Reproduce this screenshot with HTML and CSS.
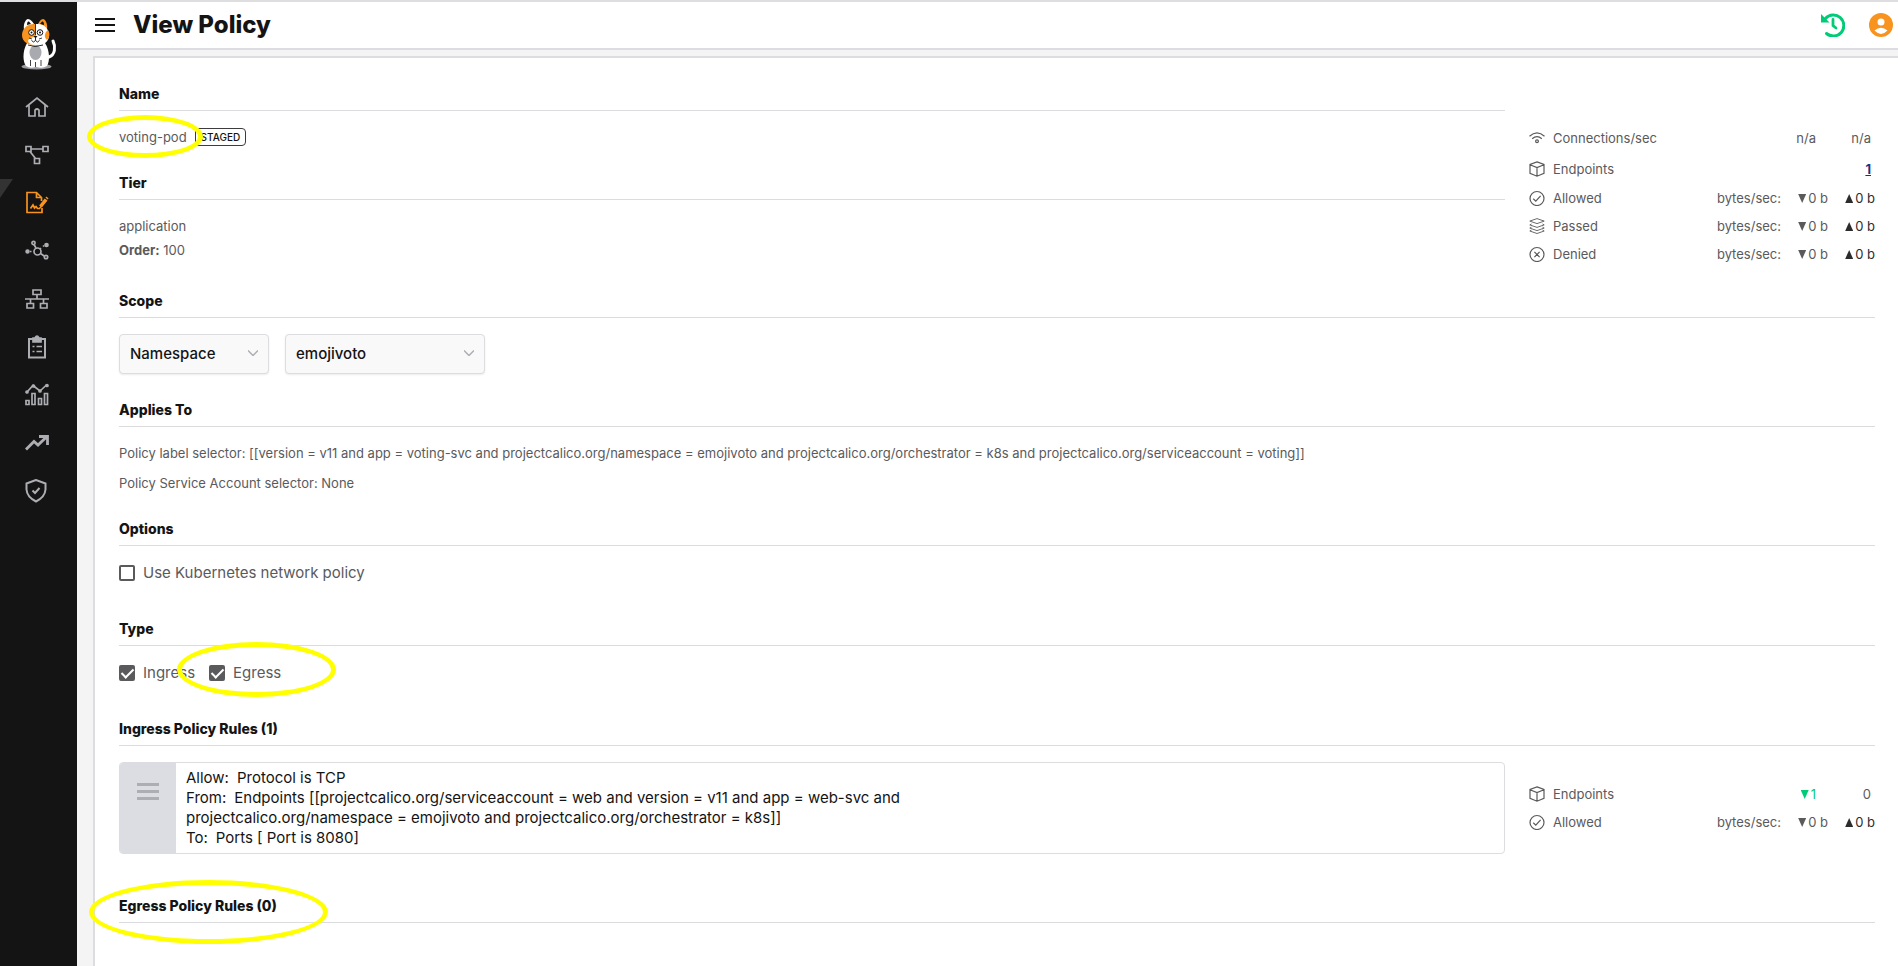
FILE: index.html
```html
<!DOCTYPE html>
<html lang="en">
<head>
<meta charset="utf-8">
<title>View Policy</title>
<link rel="stylesheet" href="styles.css">
</head>
<body>
<svg class="defs" aria-hidden="true">
  <symbol id="i-cube" viewBox="0 0 16 16"><path d="M8 .9 15 3.400v8.900L8 15.200 1 12.300V3.400zM1 3.800l7 2.700 7-2.700M8 6.500v8.600"/></symbol>
  <symbol id="i-allow" viewBox="0 0 16 16"><circle cx="8" cy="8.500" r="7"/><path d="m4.300 8.800 2.500 2.400 4.800-5.400"/></symbol>
  <symbol id="i-wifi" viewBox="0 0 16 16"><path d="M.5 6.200Q8-.6 15.500 6.200M3.200 8.700Q8 4.400 12.800 8.700"/><circle cx="8" cy="11.200" r="1.400"/></symbol>
  <symbol id="i-layers" viewBox="0 0 16 16"><path stroke-width=".9" d="m8 .6 7.200 2.500L8 5.600.8 3.100zM2.500 6 .8 6.900 8 9.400l7.200-2.500L13.500 6M2.500 9.200l-1.700.9L8 12.600l7.200-2.500-1.700-.9M2.500 12.100l-1.700.9L8 15.500l7.200-2.500-1.700-.9"/></symbol>
  <symbol id="i-deny" viewBox="0 0 16 16"><circle cx="8" cy="8.500" r="7"/><path d="m5.400 5.900 5.200 5.200m0-5.200-5.200 5.200"/></symbol>
</svg>

<div class="app">
  <nav class="sidebar" aria-label="Main">
    <a class="logo" href="#" aria-label="Home">
      <svg width="36" height="52" viewBox="0 0 36 52">
        <ellipse cx="15.500" cy="47.500" rx="15" ry="3" fill="#9b9ca1"/>
        <path d="M28 38c6-2 7-10 4-16" fill="none" stroke="#fff" stroke-width="3" stroke-linecap="round"/>
        <path d="M6 24C1 33 2 43 5 47q4 3 10 1 7 2 11-1c3-5 3-15-2-23z" fill="#fff"/>
        <ellipse cx="14.500" cy="33.500" rx="6" ry="7.500" fill="#a9aaaf"/>
        <path d="M9.500 41v6m10.500-6v6M14.500 43v5" stroke="#141414" fill="none" stroke-width=".8"/>
        <path d="M3 11C2 4 5 0 7 0s5 3 6 5z" fill="#fff"/><path d="M6 6C6 3 7 2 8 2.500L10 5z" fill="#141414"/>
        <path d="M26 11C27 4 24 0 22 0s-4 3-5 5z" fill="#f7931e"/><path d="M23 6c0-3-1-4-2-3.500L19 5z" fill="#141414"/>
        <path d="M15 5C6 4 1 10 1 16c0 7 6 10 14 10z" fill="#f7931e"/>
        <path d="M15 5c8-1 13 5 13 11 0 7-5 10-13 10z" fill="#fff"/>
        <path d="M27 11c2 3 2 7-1 10-3-2-3-7 1-10z" fill="#f7931e"/>
        <ellipse cx="14.500" cy="22" rx="7.500" ry="4" fill="#fff"/>
        <path d="M14.500 5v11M8 19l3 1m10-1-3 1" stroke="#141414" stroke-width=".8"/>
        <circle cx="10.500" cy="13.500" r="2.800" fill="#fff" stroke="#141414"/><circle cx="19" cy="13.500" r="2.800" fill="#fff" stroke="#141414"/>
        <circle cx="10.500" cy="13.500" r="1" fill="#141414"/><circle cx="19" cy="13.500" r="1" fill="#141414"/>
        <path d="M12.500 17h4l-2 2.500z" fill="#141414"/>
        <path d="M14.500 19v2.500m-4 0q2 3 4 0 2 3 4 0M7 26q7 3 15 0" fill="none" stroke="#141414" stroke-width=".9"/>
      </svg>
    </a>
    <a class="nav" href="#" aria-label="Dashboard"><svg viewBox="0 0 24 24"><path d="m1 12 11-9 11 9M4 10v11h6v-6q2-2 4 0v6h6V10"/></svg></a>
    <a class="nav" href="#" aria-label="Service graph"><svg viewBox="0 0 24 24"><path d="M1 3.500h5v5H1zm17 0h5v5h-5zm-8.500 12h5v5h-5zM6 6h12M5 8.500l5.500 7"/></svg></a>
    <a class="nav nav-active" href="#" aria-label="Policies" aria-current="page"><svg viewBox="0 0 24 24"><path d="M17 17v4.500H2v-20h9.500l5 5V10M11.500 1.500v5h5"/><path d="M5.500 17.500 8 14l1.500 3 1.500-1.500 1.500 2h2l7-8.500"/><path d="m15.500 15.500 5.500-7" stroke-width="3.500"/><path d="m21.500 7.500 1-1" stroke-width="3"/></svg></a>
    <a class="nav" href="#" aria-label="Endpoints"><svg viewBox="0 0 24 24"><circle cx="12.500" cy="12.500" r="3.500"/><path d="M11 9 9 5.500m6.500 9L20 17.500M15 10l1-1m2-1.500 1-1M5 12.500h1.500"/><circle cx="8.500" cy="4" r="1.600"/><circle cx="21" cy="18" r="1.700"/><circle class="solid" cx="21.500" cy="6" r="1.500"/><circle class="solid" cx="2.500" cy="12.500" r="1.400"/></svg></a>
    <a class="nav" href="#" aria-label="Networks"><svg viewBox="0 0 24 24"><path d="M8 3h8v4.500H8zM2 16.500h6.500v4.500H2zm13.500 0H22v4.500h-6.500zM0 12h24M12 7.500V12m-6.500 0v4.500m13-4.500v4.500"/></svg></a>
    <a class="nav" href="#" aria-label="Compliance"><svg viewBox="0 0 24 24"><path d="M4 4h16v18.500H4z" stroke-width="2"/><path class="solid" d="M8 3h2q2-4 4 0h2v4H8z"/><path d="M7.500 11.500h2m2 0H17m-9.500 5h2m2 0H17"/></svg></a>
    <a class="nav" href="#" aria-label="Activity"><svg viewBox="0 0 24 24"><path d="m2 9 6-6.500L15 8l7-6.500M1 17.500h3v4H1zM7 10.500h3v11H7zm6.500 5h3v6h-3zm6-5h3v11h-3z"/><circle class="solid" cx="2" cy="9" r="1"/><circle class="solid" cx="8.500" cy="3" r="1"/><circle class="solid" cx="15" cy="8" r="1"/><circle class="solid" cx="22" cy="2.500" r="1"/></svg></a>
    <a class="nav" href="#" aria-label="Trends"><svg viewBox="0 0 24 24"><path d="m1 18.500 8-8 4 3.500 9-8.500M14 5.500h8.500V14" stroke-width="2.800"/></svg></a>
    <a class="nav" href="#" aria-label="Threat defense"><svg viewBox="0 0 24 24"><path d="M11 1 1.500 4.500v6Q2 18 11 22.500 20 18 20.500 10.500v-6z" stroke-width="2"/><path d="m7.500 11.500 2.500 2.500 4.500-5" stroke-width="2"/></svg></a>
  </nav>

  <div class="page">
    <header class="topbar">
      <button class="icon-btn" type="button" aria-label="Toggle menu"><svg width="20" height="14" viewBox="0 0 20 14"><path d="M0 1h20M0 7h20M0 13h20" stroke="#141414" stroke-width="2"/></svg></button>
      <h1>View Policy</h1>
      <div class="topbar-actions">
        <button class="icon-btn" type="button" aria-label="History"><svg width="24" height="24" viewBox="0 0 24 24" fill="none" stroke="#0c7" stroke-width="3"><path d="M4.500 5.500A10.500 10.500 0 1 1 5.500 20.500" stroke-linecap="round"/><path d="M0 1v8.500h8.500z" fill="#0c7" stroke="none"/><path d="M12 6.500v6l3 2.500" stroke-linecap="round" stroke-width="2.800"/></svg></button>
        <button class="icon-btn" type="button" aria-label="Account"><svg width="24" height="24" viewBox="0 0 24 24"><circle cx="12" cy="12" r="12" fill="#f7931e"/><circle cx="12" cy="9" r="3.500" fill="#fff"/><path d="M5.500 17.500q6.500-5.500 13 0-6.500 7-13 0z" fill="#fff"/></svg></button>
      </div>
    </header>

    <main class="panel">
      <div class="split">
        <div>
          <section class="section">
            <h2>Name</h2>
            <div class="name-row">
              <span class="text">voting-pod</span>
              <span class="badge">STAGED</span>
              <span class="mark mark-name"></span>
            </div>
          </section>
          <section class="section">
            <h2>Tier</h2>
            <div class="tier">
              <p class="text">application</p>
              <p class="text"><b>Order:</b> 100</p>
            </div>
          </section>
        </div>
        <table class="stats stats-main">
          <tr class="tall"><th scope="row"><span class="stat-label"><svg><use href="#i-wifi"/></svg>Connections/sec</span></th><td></td><td class="count">n/a</td><td class="count">n/a</td></tr>
          <tr class="tall"><th scope="row"><span class="stat-label"><svg><use href="#i-cube"/></svg>Endpoints</span></th><td></td><td></td><td class="count"><a href="#">1</a></td></tr>
          <tr><th scope="row"><span class="stat-label"><svg><use href="#i-allow"/></svg>Allowed</span></th><td>bytes/sec:</td><td><i class="down"></i>0 b</td><td class="out"><i class="up"></i>0 b</td></tr>
          <tr><th scope="row"><span class="stat-label"><svg><use href="#i-layers"/></svg>Passed</span></th><td>bytes/sec:</td><td><i class="down"></i>0 b</td><td class="out"><i class="up"></i>0 b</td></tr>
          <tr><th scope="row"><span class="stat-label"><svg><use href="#i-deny"/></svg>Denied</span></th><td>bytes/sec:</td><td><i class="down"></i>0 b</td><td class="out"><i class="up"></i>0 b</td></tr>
        </table>
      </div>

      <section class="section">
        <h2>Scope</h2>
        <div class="selects">
          <span class="select select-kind"><select aria-label="Scope type"><option>Namespace</option></select><svg width="10" height="6" viewBox="0 0 10 6"><path d="m0 .5 5 5 5-5"/></svg></span>
          <span class="select select-value"><select aria-label="Namespace"><option>emojivoto</option></select><svg width="10" height="6" viewBox="0 0 10 6"><path d="m0 .5 5 5 5-5"/></svg></span>
        </div>
      </section>

      <section class="section">
        <h2>Applies To</h2>
        <div class="selectors">
          <p class="text">Policy label selector: [[version = v11 and app = voting-svc and projectcalico.org/namespace = emojivoto and projectcalico.org/orchestrator = k8s and projectcalico.org/serviceaccount = voting]]</p>
          <p class="text">Policy Service Account selector: None</p>
        </div>
      </section>

      <section class="section section-options">
        <h2>Options</h2>
        <div class="checks"><label><input type="checkbox">Use Kubernetes network policy</label></div>
      </section>

      <section class="section section-options">
        <h2>Type</h2>
        <div class="checks">
          <label><input type="checkbox" checked>Ingress</label>
          <label><input type="checkbox" checked>Egress</label>
          <span class="mark mark-egress"></span>
        </div>
      </section>

      <section class="section section-rules">
        <h2>Ingress Policy Rules (1)</h2>
        <div class="split split-center">
          <article class="rule">
            <div class="handle"><svg width="22" height="17" viewBox="0 0 22 17"><path d="M0 1.500h22M0 8.500h22M0 15.500h22" stroke="#adaeb3" stroke-width="3"/></svg></div>
            <div class="rule-text">
              <p><span class="key">Allow:</span>Protocol is TCP</p>
              <p><span class="key">From:</span>Endpoints [[projectcalico.org/serviceaccount = web and version = v11 and app = web-svc and projectcalico.org/namespace = emojivoto and projectcalico.org/orchestrator = k8s]]</p>
              <p><span class="key">To:</span>Ports [ Port is 8080]</p>
            </div>
          </article>
          <table class="stats">
            <tr><th scope="row"><span class="stat-label"><svg><use href="#i-cube"/></svg>Endpoints</span></th><td></td><td class="count match"><i class="down"></i>1</td><td class="count">0</td></tr>
            <tr><th scope="row"><span class="stat-label"><svg><use href="#i-allow"/></svg>Allowed</span></th><td>bytes/sec:</td><td><i class="down"></i>0 b</td><td class="out"><i class="up"></i>0 b</td></tr>
          </table>
        </div>
      </section>

      <section class="section marked">
        <h2>Egress Policy Rules (0)</h2>
        <span class="mark mark-rules"></span>
      </section>
    </main>
  </div>
</div>
</body>
</html>
```

FILE: styles.css
```css
* { box-sizing: border-box; }
body {
  margin: 0;
  font-family: Inter, "Liberation Sans", sans-serif;
  font-size: 13px;
  line-height: 20px;
  color: #5a5a5c;
  background: #f4f4f4;
}
h1, h2, p { margin: 0; }
.defs { position: absolute; width: 0; height: 0; }

.app { display: flex; min-height: 100vh; border-top: 2px solid #dedee0; }

.sidebar { flex: none; width: 77px; background: #141414; }
.logo { display: flex; justify-content: center; height: 81px; padding-top: 17px; }
.nav { position: relative; display: flex; align-items: center; justify-content: center; height: 48px; padding-right: 3px; color: #adaeb3; }
.nav svg { width: 24px; height: 24px; fill: none; stroke: currentColor; stroke-width: 1.7; }
.nav .solid { fill: currentColor; }
.nav-active { color: #f7931e; }
.nav-active::before {
  content: "";
  position: absolute;
  left: 0;
  top: 0;
  width: 13px;
  height: 19px;
  background: #333;
  clip-path: polygon(0 0, 100% 0, 0 100%);
}

.page { flex: 1; min-width: 0; display: flex; flex-direction: column; }
.topbar {
  display: flex;
  align-items: center;
  gap: 18px;
  height: 48px;
  padding: 0 5px 0 18px;
  background: #fff;
  border-bottom: 2px solid #dcdce1;
}
.topbar h1 { flex: 1; font-size: 24px; line-height: 32px; font-weight: 800; color: #141414; }
.topbar-actions { display: flex; gap: 24px; }
.icon-btn { display: flex; padding: 0; border: 0; background: none; cursor: pointer; }

.panel {
  flex: 1;
  margin: 6px 0 0 16px;
  padding: 24px 23px 24px 24px;
  background: #fff;
  border: solid #dcdce1;
  border-width: 2px 0 0 2px;
}
.split { display: grid; grid-template-columns: minmax(0, 1fr) 346px; column-gap: 24px; }
.split-center { align-items: center; }

.section { margin-bottom: 24px; }
.section-options { margin-bottom: 33px; }
.section-rules { margin-bottom: 40px; }
h2 {
  margin-bottom: 16px;
  padding-bottom: 4px;
  border-bottom: 1px solid #dcdce0;
  font-size: 14px;
  line-height: 24px;
  font-weight: 800;
  color: #141414;
}
.text { font-size: 13px; line-height: 20px; }

.name-row { position: relative; display: flex; align-items: center; gap: 8px; }
.badge {
  padding: 0 5px;
  border: 1px solid #3c3c3e;
  border-radius: 4px;
  font-size: 10px;
  line-height: 16px;
  font-weight: 500;
  color: #141414;
}
.tier { display: grid; gap: 4px; padding-bottom: 5px; }
.selectors { display: grid; gap: 10px; }

.mark { position: absolute; border: 5px solid #ff0; border-radius: 50%; pointer-events: none; }
.mark-name { left: -32px; top: -12px; width: 116px; height: 43px; }
.mark-egress { left: 58px; top: -20px; width: 159px; height: 55px; }
.marked { position: relative; }
.mark-rules { left: -30px; top: -14px; width: 239px; height: 64px; }

.selects { display: flex; gap: 16px; }
.select { position: relative; }
.select-kind { width: 150px; }
.select-value { width: 200px; }
.select select {
  width: 100%;
  height: 40px;
  padding: 0 32px 0 10px;
  appearance: none;
  border: 1px solid #dcdce1;
  border-radius: 4px;
  background: #f9f9f9;
  box-shadow: 0 1px 2px #00000014;
  font: 500 15px/20px Inter, sans-serif;
  color: #141414;
}
.select svg { position: absolute; right: 11px; top: 16px; fill: none; stroke: #adaeb3; stroke-width: 1.5; pointer-events: none; }

.checks { position: relative; display: flex; gap: 14px; height: 22px; font-size: 15px; line-height: 22px; }
.checks label { display: flex; align-items: center; gap: 8px; }
.checks input {
  display: grid;
  place-items: center;
  width: 16px;
  height: 16px;
  margin: 0;
  appearance: none;
  border: 2px solid #5a5a5c;
  border-radius: 2px;
}
.checks input:checked { background: #5a5a5c; }
.checks input:checked::after {
  content: "";
  width: 5px;
  height: 10px;
  margin-top: -3px;
  border: solid #fff;
  border-width: 0 2px 2px 0;
  transform: rotate(45deg);
}

.rule { display: flex; border: 1px solid #dcdce1; border-radius: 4px; overflow: hidden; }
.handle { flex: none; width: 56px; padding: 20px 0 0 17px; background: #dcdde2; }
.rule-text { max-width: 780px; padding: 5px 10px; font-size: 15px; line-height: 20px; color: #141414; }
.key { margin-right: 8px; }

.stats { width: 100%; border-collapse: collapse; table-layout: fixed; font-size: 13px; }
.stats-main { align-self: start; margin-top: 40px; }
.stats tr { height: 28px; }
.stats .tall { height: 31px; }
.stats th { width: 178px; padding: 0; text-align: left; font-weight: 400; }
.stats td { padding: 0; text-align: right; white-space: nowrap; }
.stats td:nth-child(2) { width: 74px; }
.stats td:nth-child(3) { width: 47px; }
.stats td:nth-child(4) { width: 47px; }
.stats td.count { padding-right: 4px; }
.stats td.count:nth-child(3) { padding-right: 12px; }
.stats .out { color: #2c2c2e; }
.stats .match { color: #0c7; }
.stats a { font-weight: 700; color: #1f2f7f; }
.stat-label { display: flex; align-items: center; gap: 8px; }
.stat-label svg { width: 16px; height: 16px; fill: none; stroke: #5a5a5c; stroke-width: 1.2; }
.down, .up { display: inline-block; width: 8px; height: 9px; margin-right: 2px; background: currentColor; }
.down { clip-path: polygon(0 0, 100% 0, 50% 100%); }
.up { clip-path: polygon(50% 0, 100% 100%, 0 100%); }
```
